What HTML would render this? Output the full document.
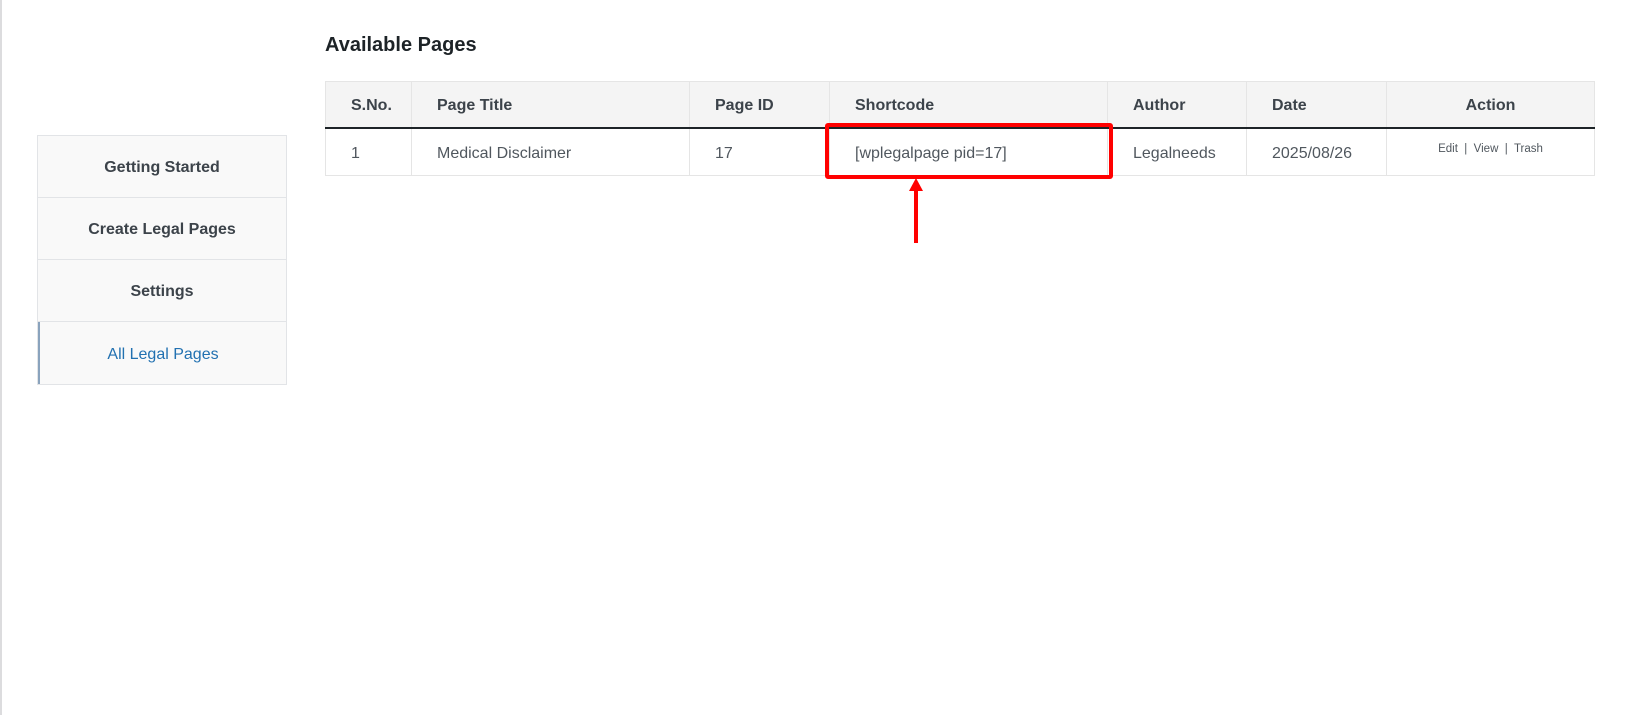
<!DOCTYPE html>
<html><head><meta charset="utf-8"><style>
*{margin:0;padding:0;box-sizing:border-box}
body{width:1631px;height:715px;background:#fff;font-family:"Liberation Sans",sans-serif;position:relative;overflow:hidden;color:#3c434a}
.lb{position:absolute;left:0;top:0;width:2px;height:715px;background:#dcdcde}
h2{position:absolute;left:325px;top:34px;font-size:20px;font-weight:600;color:#1d2327}
.side{position:absolute;left:37px;top:135px;width:250px;border:1px solid #e2e4e7;background:#f9f9f9}
.side div{height:62px;display:flex;align-items:center;justify-content:center;font-size:16px;font-weight:600;color:#3c434a;border-bottom:1px solid #e2e4e7;padding-top:3px}
.side div:last-child{border-bottom:none;color:#2271b1;border-left:2px solid #8aa3bd;font-weight:500}
table{position:absolute;left:325px;top:81px;width:1270px;border-collapse:collapse;font-size:16px}
th{background:#f4f4f4;height:46px;text-align:left;font-weight:600;color:#3c434a;padding-left:25px;padding-top:4px;border:1px solid #e5e5e5;border-bottom:2px solid #1d2327}
td{height:48px;padding-left:25px;padding-top:4px;color:#50575e;border:1px solid #e5e5e5;background:#fff}
.act{text-align:center;padding-left:0;font-size:11.5px;vertical-align:top;padding-top:14px}
.red{position:absolute;left:825px;top:123px;width:288px;height:56px;border:4px solid #f00;border-radius:3px}
.arr{position:absolute;left:914px;top:188px;width:4px;height:55px;background:#f00}
.tri{position:absolute;left:909px;top:178px;width:0;height:0;border-left:7px solid transparent;border-right:7px solid transparent;border-bottom:13px solid #f00}
</style></head><body>
<div class="lb"></div>
<h2>Available Pages</h2>
<div class="side"><div>Getting Started</div><div>Create Legal Pages</div><div>Settings</div><div>All Legal Pages</div></div>
<table>
<tr><th style="width:86px">S.No.</th><th style="width:278px">Page Title</th><th style="width:140px">Page ID</th><th style="width:278px">Shortcode</th><th style="width:139px">Author</th><th style="width:140px">Date</th><th style="text-align:center;padding-left:0">Action</th></tr>
<tr><td>1</td><td>Medical Disclaimer</td><td>17</td><td>[wplegalpage pid=17]</td><td>Legalneeds</td><td>2025/08/26</td><td class="act">Edit &nbsp;|&nbsp; View &nbsp;|&nbsp; Trash</td></tr>
</table>
<div class="red"></div>
<div class="tri"></div><div class="arr"></div>
</body></html>
